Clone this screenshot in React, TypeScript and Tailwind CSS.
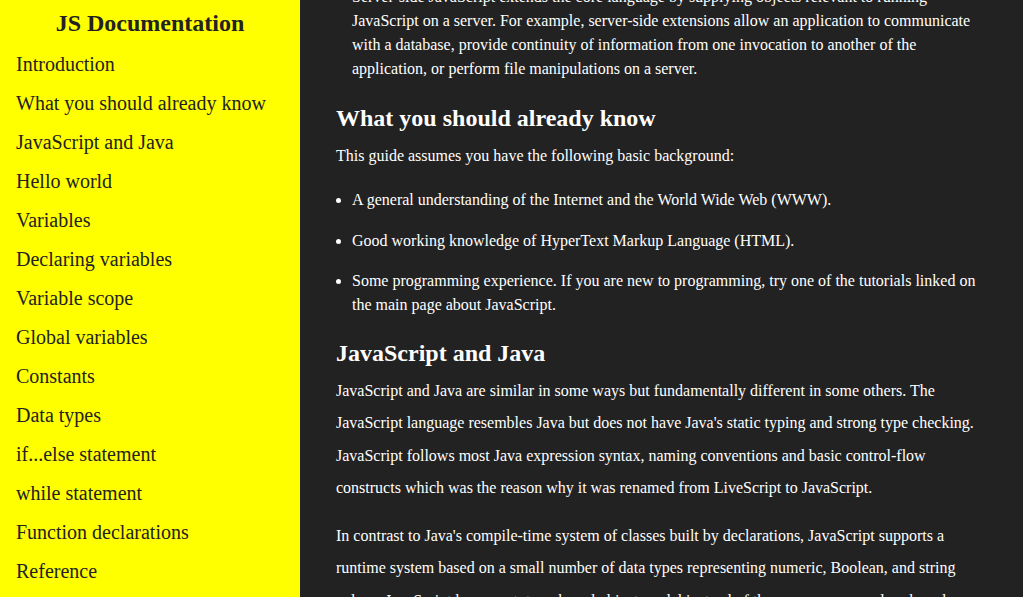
const navLinks = [
  'Introduction',
  'What you should already know',
  'JavaScript and Java',
  'Hello world',
  'Variables',
  'Declaring variables',
  'Variable scope',
  'Global variables',
  'Constants',
  'Data types',
  'if...else statement',
  'while statement',
  'Function declarations',
  'Reference',
];

const background = [
  'A general understanding of the Internet and the World Wide Web (WWW).',
  'Good working knowledge of HyperText Markup Language (HTML).',
  'Some programming experience. If you are new to programming, try one of the tutorials linked on the main page about JavaScript.',
];

const App = () => {
  return (
    <div className="flex h-[597px] w-full overflow-hidden bg-[#222222] font-['Liberation_Serif',serif]">
      <nav className="flex w-[300px] shrink-0 flex-col bg-[#ffff00] text-[#222222]">
        <header className="flex h-[45px] items-center justify-center text-[24px] font-bold leading-8">
          JS Documentation
        </header>
        <ul className="-mt-px flex flex-col">
          {navLinks.map((link) => (
            <li key={link} className="flex h-[39px] items-center pl-4 text-[20px] leading-6">
              <a href="#">{link}</a>
            </li>
          ))}
        </ul>
      </nav>

      <main className="flex min-w-0 flex-1 flex-col px-9 text-[16px] text-white">
        <ul className="mt-[-15px] list-disc pl-4 leading-6">
          <li>
            Server-side JavaScript extends the core language by supplying objects relevant to running JavaScript on a
            server. For example, server-side extensions allow an application to communicate with a database, provide
            continuity of information from one invocation to another of the application, or perform file manipulations
            on a server.
          </li>
        </ul>

        <section className="flex flex-col">
          <h2 className="mt-[21px] text-[24px] font-bold leading-8">What you should already know</h2>
          <p className="mt-[6px] leading-8">This guide assumes you have the following basic background:</p>
          <ul className="mt-4 flex list-disc flex-col gap-[16.5px] pl-4 leading-6">
            {background.map((item) => (
              <li key={item}>{item}</li>
            ))}
          </ul>
        </section>

        <section className="flex flex-col">
          <h2 className="mt-5 text-[24px] font-bold leading-8">JavaScript and Java</h2>
          <p className="mt-[6px] leading-[32.3px]">
            JavaScript and Java are similar in some ways but fundamentally different in some others. The JavaScript
            language resembles Java but does not have Java's static typing and strong type checking. JavaScript follows
            most Java expression syntax, naming conventions and basic control-flow constructs which was the reason why it
            was renamed from LiveScript to JavaScript.
          </p>
          <p className="mt-4 leading-[32.3px]">
            In contrast to Java's compile-time system of classes built by declarations, JavaScript supports a runtime
            system based on a small number of data types representing numeric, Boolean, and string values. JavaScript has
            a prototype-based object model instead of the more common class-based object model. The prototype-based model
            provides dynamic inheritance; that is, what is inherited can vary for individual objects.
          </p>
        </section>
      </main>
    </div>
  );
};

export default App;
